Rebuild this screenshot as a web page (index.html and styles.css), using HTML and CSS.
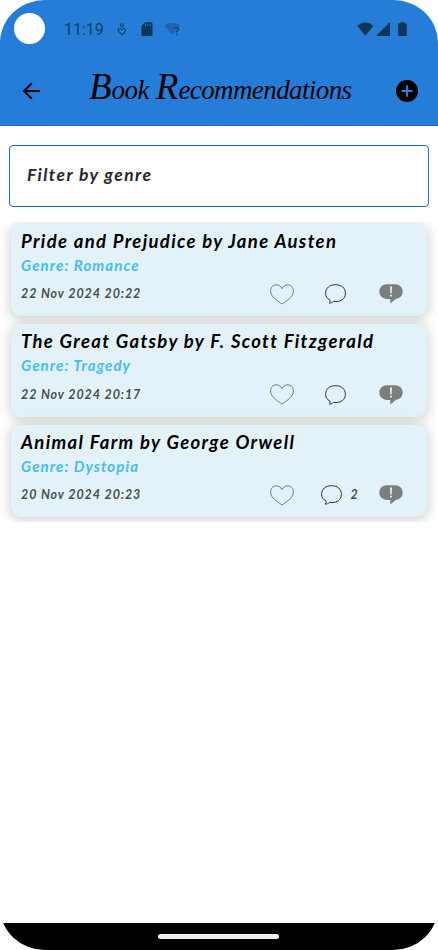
FILE: index.html
```html
<!DOCTYPE html>
<html lang="en">
<head>
<meta charset="utf-8">
<title>Book Recommendations</title>
<link rel="stylesheet" href="styles.css">
</head>
<body>
<svg class="symbols" aria-hidden="true">
  <symbol id="heart" viewBox="0 0 24 21"><path d="M12 20C9 17.700.6 13.500.6 7 .6 3.200 3.200.8 6.100.8 8.800.8 11 2.200 12 4.700 13 2.200 15.200.8 17.900.8c2.900 0 5.500 2.400 5.500 6.200C23.400 13.500 15 17.700 12 20Z" fill="none" stroke="#4d5960" stroke-width=".75"/></symbol>
  <symbol id="comment" viewBox="0 0 21 20"><path d="M4.200 19.100c.9-.9 1-1.700.9-2.900C2.200 14.700.6 12.500.6 9.300.6 4 4.500.7 10.500.7s9.900 3.400 9.900 8.600c0 5.400-4.300 8.300-9.600 8.300-.8 0-1.400-.1-2.200-.3-1.100 1.200-2.600 1.800-4.400 1.800Z" fill="none" stroke="#20282c" stroke-width=".95"/></symbol>
  <symbol id="report" viewBox="0 0 24 20"><path d="M8 .2h8c4.400 0 7.700 3 7.700 7.400 0 4-2.800 6.800-6.600 7.200L11.300 19.500v-4.600H8C3.600 14.900.3 11.900.3 7.600S3.600.2 8 .2Z" fill="#7c7f7e"/><path d="M11 2.500h2l-.3 6.900h-1.400ZM11.100 10.700h1.800v1.700h-1.800Z" fill="#e3f2f9"/></symbol>
</svg>
<div class="phone">
  <header class="top">
    <div class="status">
      <span class="camera"></span>
      <span class="clock">11:19</span>
      <svg class="care" viewBox="0 0 10 13"><g fill="none" stroke="#123e68" stroke-width="1.100"><circle cx="5" cy="2.300" r="1.500"/><path d="M5 11.700C3 9.900 1.300 8.700 1.300 7.200c0-1.800 2.600-2.400 3.700-.4 1.100-2 3.700-1.400 3.700.4 0 1.500-1.700 2.700-3.700 4.500Z"/></g></svg>
      <svg class="sdcard" viewBox="0 0 12 14"><path d="M4.300.2H10q1.500 0 1.500 1.500v10.800q0 1.500-1.500 1.500H2Q.5 14 .5 12.500V4Z" fill="#103556"/><path d="M4.500 1.700v2.500M6.800 1.700v2.500M9.100 1.700v2.500" stroke="#257dd7" stroke-width=".9"/></svg>
      <svg class="wifi-off" viewBox="0 0 17 14"><path d="M.2 3.700C4.500-.1 11.500-.1 15.900 3.700L14.500 5.300Q11 4.500 10.500 8l1 1.200L8.200 13Z" fill="#1f65ae"/><text x="10.300" y="13" class="query">?</text></svg>
      <svg class="wifi" viewBox="0 0 17 14"><path d="M.2 3.800Q8.300-3 16.500 3.800L8.300 13.700Z" fill="#103556"/></svg>
      <svg class="signal" viewBox="0 0 14 14"><path d="M14 0v14H0Z" fill="#103556"/></svg>
      <svg class="battery" viewBox="0 0 9 14"><path d="M2.800 0h3.400v1.300H8q.8 0 .8.800v11.100q0 .8-.8.800H1q-.8 0-.8-.8V2.100q0-.8.800-.8h1.800Z" fill="#103556"/></svg>
    </div>
    <div class="toolbar">
      <svg class="back" viewBox="0 0 18 18"><path d="M18 9H2M9.800 1.200 2 9l7.800 7.800" fill="none" stroke="#000" stroke-width="2"/></svg>
      <h1 class="title"><span class="initial">B</span><span class="first">ook</span><span class="initial">R</span><span>ecommendations</span></h1>
      <svg class="add" viewBox="0 0 22 22"><circle cx="11" cy="11" r="11"/><path d="M11 5.300v11.400M5.300 11h11.400" stroke="#257dd7" stroke-width="2"/></svg>
    </div>
  </header>
  <div class="filter"><span>Filter by genre</span></div>
  <main class="list">
    <article class="card">
      <h2 class="book">Pride and Prejudice by Jane Austen</h2>
      <p class="genre">Genre: Romance</p>
      <div class="meta"><time>22 Nov 2024 20:22</time>
        <svg class="heart"><use href="#heart"/></svg>
        <div class="comments"><svg class="comment"><use href="#comment"/></svg></div>
        <svg class="report"><use href="#report"/></svg></div>
    </article>
    <article class="card">
      <h2 class="book">The Great Gatsby by F. Scott Fitzgerald</h2>
      <p class="genre">Genre: Tragedy</p>
      <div class="meta"><time>22 Nov 2024 20:17</time>
        <svg class="heart"><use href="#heart"/></svg>
        <div class="comments"><svg class="comment"><use href="#comment"/></svg></div>
        <svg class="report"><use href="#report"/></svg></div>
    </article>
    <article class="card">
      <h2 class="book">Animal Farm by George Orwell</h2>
      <p class="genre">Genre: Dystopia</p>
      <div class="meta"><time>20 Nov 2024 20:23</time>
        <svg class="heart"><use href="#heart"/></svg>
        <div class="comments counted"><svg class="comment"><use href="#comment"/></svg><span>2</span></div>
        <svg class="report"><use href="#report"/></svg></div>
    </article>
  </main>
  <footer class="nav"><span class="pill"></span></footer>
</div>
</body>
</html>
```

FILE: styles.css
```css
* { box-sizing: border-box; }
body { margin: 0; background: #fff; font-family: Lato, sans-serif; }
h1, h2, p { margin: 0; }
svg { display: block; flex: none; }
.symbols { position: absolute; width: 0; height: 0; }
.phone { width: 438px; height: 950px; display: flex; flex-direction: column; overflow: hidden; border-radius: 45px / 43px; background: #fff; }
.top { height: 126px; flex: none; background: #257dd7; border-bottom: 1px solid #0c6bc9; }
.status { height: 58px; display: flex; align-items: center; padding: 0 31px 0 14px; }
.camera { width: 31px; height: 31px; position: relative; top: -1px; border-radius: 50%; background: #fff; margin-right: 19px; }
.clock { width: 41px; padding-top: 2px; font: 16px/20px Roboto, sans-serif; color: #123e68; margin-right: 12px; white-space: nowrap; }
.care { width: 10px; height: 13px; }
.sdcard { width: 12px; height: 14px; margin-left: 14px; }
.wifi-off { width: 17px; height: 14px; margin-left: 11px; }
.query { font: bold 10px Roboto, sans-serif; fill: #123e68; }
.wifi { width: 17px; height: 14px; margin-left: auto; }
.signal { width: 14px; height: 14px; margin-left: 2px; }
.battery { width: 9px; height: 14px; margin-left: 8px; }
.toolbar { height: 66px; display: flex; align-items: center; padding: 0 20px 0 22px; }
.back { width: 18px; height: 18px; }
.title { display: flex; align-items: baseline; margin: -5px 0 0 49px; font: italic 400 27px/36px "Liberation Serif", serif; letter-spacing: -.6px; white-space: nowrap; }
.initial { font-size: 37px; letter-spacing: 0; }
.first { margin-right: 7px; }
.add { width: 22px; height: 22px; margin-left: auto; }
.filter { height: 62px; flex: none; margin: 19px 9px 0; padding: 17px 17px; border: 1px solid #1671c9; border-radius: 4px; font: italic 700 17.5px/24px Lato, sans-serif; color: #28252f; letter-spacing: 1.4px; }
.list { height: 300px; flex: none; margin-top: 15px; padding: 1.5px 11px 0; overflow: hidden; display: flex; flex-direction: column; gap: 8px; }
.card { height: 92.5px; flex: none; padding: 4px 24px 0 10px; border-radius: 11px; background: #e3f2f9; box-shadow: 0 2px 12px 2px rgba(0, 0, 0, .17); }
.book { font: italic 700 18.5px/26px Lato, sans-serif; color: #000; white-space: nowrap; letter-spacing: 1.33px; }
.genre { font: italic 700 15px/22px Lato, sans-serif; color: #45bdf5; letter-spacing: 1.1px; }
.meta { height: 37px; display: flex; align-items: center; font: italic 700 12.5px/20px Lato, sans-serif; color: #4d4d4d; }
time { width: 249px; letter-spacing: .9px; white-space: nowrap; }
.heart { width: 24px; height: 21px; }
.comments { width: 83px; display: flex; align-items: center; justify-content: center; gap: 8px; }
.counted { padding-left: 8px; }
.comment { width: 21px; height: 20px; }
.report { width: 24px; height: 20px; margin-left: 2px; }
.nav { height: 27px; flex: none; margin-top: auto; background: #000; display: flex; justify-content: center; }
.pill { width: 121px; height: 5px; margin: 11px 1px 0 0; border-radius: 3px; background: #eee; }
```
